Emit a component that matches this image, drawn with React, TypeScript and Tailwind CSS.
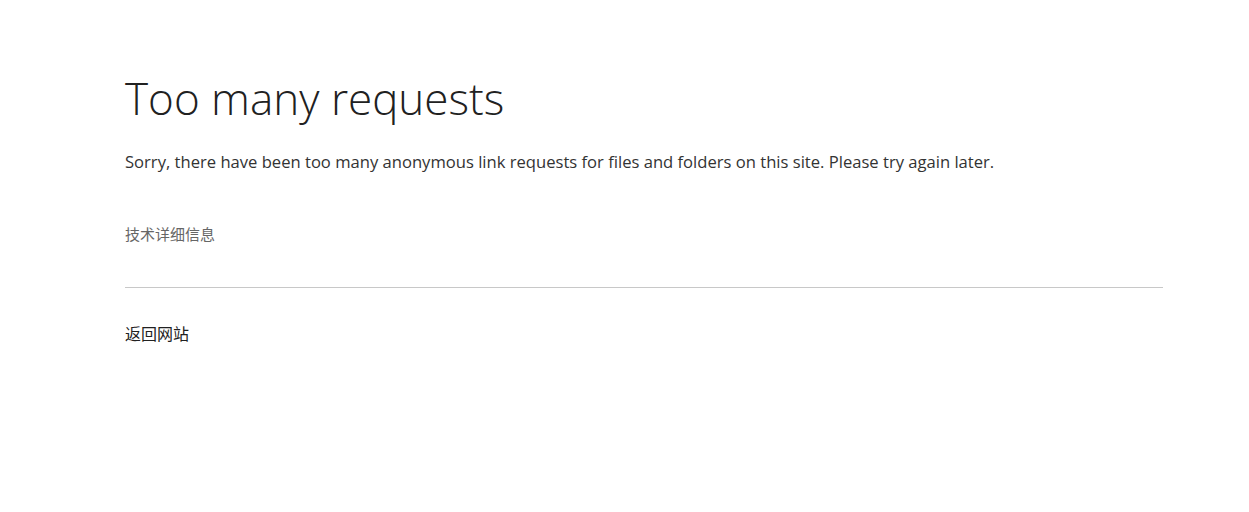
export default function App() {
  return (
    <main className="min-h-screen bg-white" style={{ fontFamily: '"Open Sans", "Noto Sans CJK SC", sans-serif' }}>
      <div className="ml-[125px] w-[1038px] pt-[68px]">
        <h1 className="text-[44px] font-light leading-[60px] text-[#212121]">Too many requests</h1>
        <p className="mt-[23px] text-[16.6px] leading-[22px] text-[#333333]">
          Sorry, there have been too many anonymous link requests for files and folders on this site. Please try again later.
        </p>
        <div className="mt-[51px] text-[15px] leading-[20px] text-[#666666]">技术详细信息</div>
        <div className="mt-[43px] border-t border-[#c8c8c8]" />
        <a href="#" className="mt-[35px] block text-[16px] leading-[22px] text-[#212121]">返回网站</a>
      </div>
    </main>
  );
}
